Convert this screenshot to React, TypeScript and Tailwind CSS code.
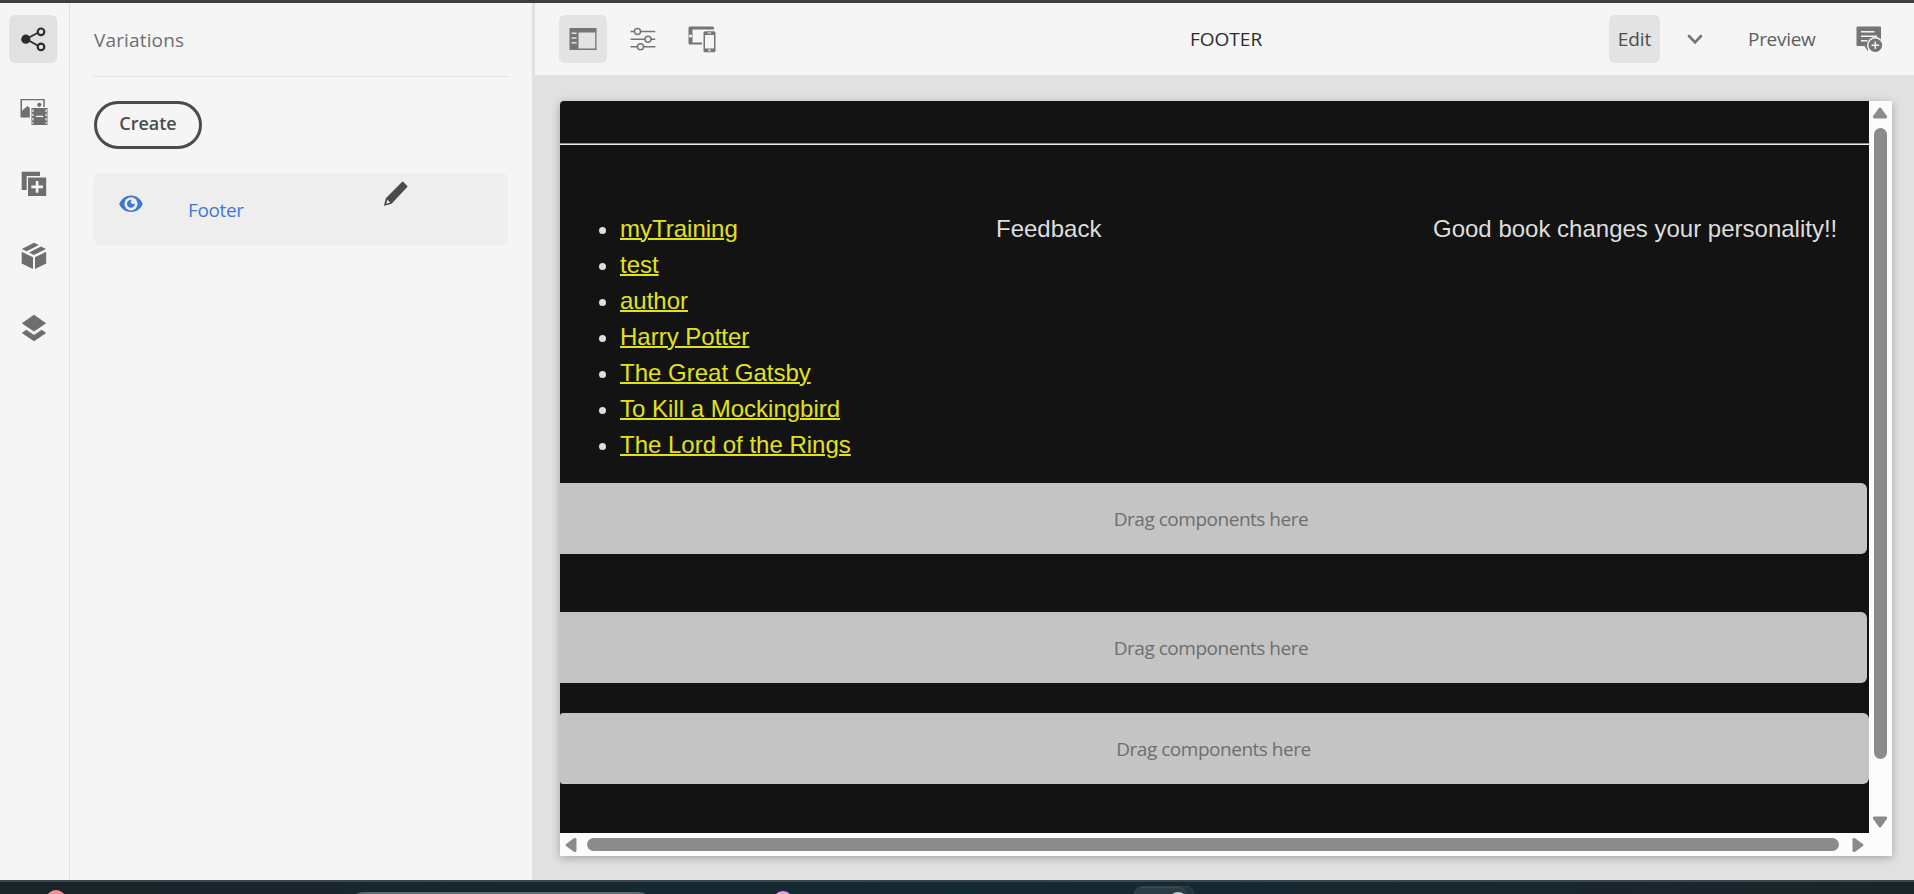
import type { ReactNode } from "react";

const ui = "font-['Open_Sans','Noto_Sans',sans-serif]";

const links = [
  "myTraining",
  "test",
  "author",
  "Harry Potter",
  "The Great Gatsby",
  "To Kill a Mockingbird",
  "The Lord of the Rings",
];

function RailButton({ active = false, children }: { active?: boolean; children: ReactNode }) {
  return (
    <button
      className={
        active
          ? "flex size-12 items-center justify-center rounded-md bg-[#e1e1e1] text-[#2c2c2c]"
          : "flex size-12 items-center justify-center rounded-md pl-px pt-[2px] text-[#6e6e6e]"
      }
    >
      {children}
    </button>
  );
}

function ShareIcon() {
  return (
    <svg width="26" height="26" viewBox="0 0 26 26" fill="none" stroke="currentColor">
      <path d="M6 13 19.500 6M6 13 19.500 20.500" strokeWidth="1.900" />
      <circle cx="5.800" cy="13.200" r="4.600" fill="currentColor" stroke="none" />
      <circle cx="21" cy="5.800" r="3.300" fill="#e1e1e1" strokeWidth="2.200" />
      <circle cx="21" cy="20.900" r="3.300" fill="#e1e1e1" strokeWidth="2.200" />
    </svg>
  );
}

function AssetsIcon() {
  return (
    <svg width="28" height="28" viewBox="0 0 28 28" fill="currentColor">
      <path d="M.5 1h24.300v8h-1.500V2.300H2V12.700L7.500 8 9.800 10v9.500H.5Z" />
      <circle cx="19.300" cy="6.800" r="2.100" />
      <path d="M11.500 10h16v17h-16Z" />
      <path fill="#f5f5f5" d="M12.300 11.500h1.200v2.500h-1.200Zm0 4.300h1.200v2.500h-1.200Zm0 4.300h1.200v2.500h-1.200Zm0 4.100h1.200v1.800h-1.200ZM25.500 11.500h1.200v2.500h-1.200Zm0 4.300h1.200v2.500h-1.200Zm0 4.300h1.200v2.500h-1.200Zm0 4.100h1.200v1.800h-1.200ZM15.800 17.800h7.500v1.300h-7.500Z" />
    </svg>
  );
}

function ComponentsIcon() {
  return (
    <svg width="26" height="26" viewBox="0 0 26 26" fill="currentColor">
      <path d="M.7.700H19V5H5.700V19H.7Z" />
      <path d="M7 6.500H25.200V25H7Z" />
      <path d="M16.100 10v11.800M10.300 15.900h11.700" stroke="#f5f5f5" strokeWidth="2.700" />
    </svg>
  );
}

function BoxIcon() {
  return (
    <svg width="26" height="28" viewBox="0 0 26 28" fill="currentColor">
      <path d="M13 .8 17.800 2.900 5.800 9.200.8 6.900ZM20 4.600 25 6.900 12.800 13.100 8 10.600Z" />
      <path d="M.7 9.800 12 15.300V27L.7 21.500ZM25.200 9.800 14 15.300V27L25.200 21.500Z" />
    </svg>
  );
}

function LayersIcon() {
  return (
    <svg width="26" height="28" viewBox="0 0 26 28" fill="currentColor">
      <path d="M13 .8 25.200 9.300 13 17.600.8 9.300Z" />
      <path d="M5.300 15.800 13 21 20.700 15.800 25.200 18.900 13 27.300.8 18.900Z" />
    </svg>
  );
}

function EyeIcon() {
  return (
    <svg width="24" height="18" viewBox="0 0 24 18" className="ml-[0.5px] mt-[22px] text-[#4078d0]" fill="currentColor">
      <path d="M12 .5C5.500.5 1.500 5.500.2 9 1.500 12.500 5.500 17 12 17s10.500-4.500 11.700-8C22.500 5.500 18.500.5 12 .5Z" />
      <circle cx="12" cy="8.800" r="6.600" fill="#eee" />
      <path d="M12.800 4.900A4 4 0 1 0 15.900 8.100 2 2 0 0 1 12.800 8.600 2.400 2.400 0 0 1 12.800 4.900Z" />
    </svg>
  );
}

function PencilIcon() {
  return (
    <svg width="24" height="26" viewBox="0 0 24 26" fill="#4b4b4b">
      <path d="M18.200.7Q18.700.2 19.200.7L23.300 5Q23.700 5.500 23.300 6L8 22.300Q7.500 22.800 6.800 23L.3 24.800Q-.2 24.800.100 24L1.800 17.300Z" />
      <path d="M3.400 18.700 6.200 21.600 2.200 22.800Z" fill="#eee" />
    </svg>
  );
}

function PanelIcon() {
  return (
    <svg width="28" height="24" viewBox="0 0 28 24" className="mr-px">
      <path d="M.5 1H27.500V23H.5Z" fill="#757575" />
      <path d="M9.500 5.500H26.200V21.500H9.500Z" fill="#e3e3e3" />
      <path d="M2.600 6.300H7.600M2.600 11H7.600M2.600 15.700H7.600" stroke="#e3e3e3" strokeWidth="1.500" />
    </svg>
  );
}

function SlidersIcon() {
  return (
    <svg width="26" height="24" viewBox="0 0 26 24" fill="#f5f5f5" stroke="#757575">
      <path d="M.5 4.500H25.300M.5 12.200H25.300M.5 19.700H25.300" strokeWidth="1.500" />
      <circle cx="7.500" cy="4.500" r="3" strokeWidth="1.500" />
      <circle cx="18" cy="12.200" r="3" strokeWidth="1.500" />
      <circle cx="10.500" cy="19.700" r="3" strokeWidth="1.500" />
    </svg>
  );
}

function DevicesIcon() {
  return (
    <svg width="28" height="27" viewBox="0 0 28 27" fill="#757575">
      <path d="M2 .5H24.500Q26 .5 26 2V3.500H4.500V16.500H14V18.500H2Q.5 18.500.5 17V2Q.5.500 2 .5Z" />
      <circle cx="2.500" cy="10" r="1.600" fill="#f5f5f5" />
      <rect x="15.500" y="5.300" width="12" height="21" rx="1.600" />
      <path d="M17 9H26V22.500H17Z" fill="#f5f5f5" />
      <path d="M19.500 6.600h3.700v1h-3.700ZM20.500 23.500h2v1.700h-2Z" fill="#f5f5f5" />
    </svg>
  );
}

function AnnotateIcon() {
  return (
    <svg width="27" height="27" viewBox="0 0 27 27" className="mt-px">
      <path d="M1.500.5H24Q25 .5 25 1.500V19H12V25.500L8.500 20H1.500Q.5 20 .5 19V1.500Q.5.500 1.500.5Z" fill="#757575" />
      <path d="M5 5.700H18.500M5 10.200H21M5 14.700H11.500" stroke="#f5f5f5" strokeWidth="1.500" />
      <circle cx="19.300" cy="19.300" r="8.300" fill="#f5f5f5" />
      <circle cx="19.300" cy="19.300" r="6.800" fill="#757575" />
      <path d="M19.300 15.500v7.600M15.500 19.300h7.600" stroke="#f5f5f5" strokeWidth="1.500" />
    </svg>
  );
}

function Arrow({ className }: { className: string }) {
  return (
    <svg width="16" height="12" viewBox="0 0 16 12" className={className} fill="#8b8b8b">
      <path d="M6.900 1Q8 0 9.100 1L15 9.200Q15.500 11.300 13.800 11.500H2.200Q.5 11.300 1 9.200Z" />
    </svg>
  );
}

function DropZone({ className }: { className: string }) {
  return (
    <div className={"flex h-[71px] shrink-0 items-center justify-center bg-[#c4c4c4] " + className}>
      <span className={"text-[19px] tracking-[-0.48px] text-[#6e6e6e] " + ui}>Drag components here</span>
    </div>
  );
}

export default function App() {
  return (
    <div className={"flex h-[894px] w-[1914px] flex-col overflow-hidden bg-[#f5f5f5] text-[19px] " + ui}>
      <div className="h-[3px] shrink-0 bg-[#3e3e3e]" />
      <div className="flex h-[877px] shrink-0">
        <nav className="flex w-[70px] shrink-0 flex-col items-center gap-6 border-r border-[#e1e1e1] pr-[3px] pt-3">
          <RailButton active><ShareIcon /></RailButton>
          <RailButton><AssetsIcon /></RailButton>
          <RailButton><ComponentsIcon /></RailButton>
          <RailButton><BoxIcon /></RailButton>
          <RailButton><LayersIcon /></RailButton>
        </nav>

        <aside className="flex w-[465px] shrink-0 flex-col border-r-[3px] border-[#e1e1e1] pl-6 pr-6">
          <h2 className="flex h-[74px] w-[414px] shrink-0 items-center border-b border-[#e1e1e1] pt-px text-[19px] tracking-[0.15px] text-[#6e6e6e]">
            Variations
          </h2>
          <button className="mt-6 flex h-12 w-[108px] items-center justify-center rounded-full border-[3px] border-[#4b4b4b] pb-1 text-[18px] font-semibold text-[#4b4b4b]">
            Create
          </button>
          <div className="mt-6 flex h-[72px] w-[414px] rounded-md bg-[#eeeeee] pl-6">
            <EyeIcon />
            <span className="ml-[45.5px] mt-[23px] w-[196px] leading-7 tracking-[-0.35px] text-[#4078d0]">Footer</span>
            <div className="mt-[8px]"><PencilIcon /></div>
          </div>
        </aside>

        <main className="flex min-w-0 flex-1 flex-col bg-[#e1e1e1]">
          <header className="flex h-[72px] shrink-0 items-center bg-[#f5f5f5] pl-6">
            <button className="flex size-12 items-center justify-center rounded-md bg-[#e3e3e3]"><PanelIcon /></button>
            <button className="ml-[23px]"><SlidersIcon /></button>
            <button className="ml-[32px] mt-px"><DevicesIcon /></button>
            <h1 className="ml-[474px] w-[75px] whitespace-nowrap pt-px text-[19px] text-[#2c2c2c]">FOOTER</h1>
            <button className="ml-[344px] flex h-12 w-[51px] items-center justify-center rounded-md bg-[#e3e3e3] pt-px tracking-[-0.1px] text-[#4b4b4b]">Edit</button>
            <svg width="16" height="11" viewBox="0 0 16 11" fill="none" className="ml-[27px]">
              <path d="M2 2 8 8.300 14 2" stroke="#757575" strokeWidth="2.600" strokeLinecap="round" />
            </svg>
            <span className="ml-[45px] w-[68px] whitespace-nowrap pt-px tracking-[-0.3px] text-[#5e5e5e]">Preview</span>
            <button className="ml-[40px]"><AnnotateIcon /></button>
          </header>

          <section className="ml-[25px] mt-[26px] flex h-[755px] w-[1332px] shrink-0 flex-col overflow-hidden rounded-tl bg-[#fcfcfc] shadow-[0_2px_10px_rgba(0,0,0,0.28)]">
            <div className="flex h-[732px] shrink-0">
              <div className="flex w-[1309px] shrink-0 flex-col overflow-hidden bg-[#131313] font-['Liberation_Sans',Arial,sans-serif] text-[24px] leading-9 text-[#dedede]">
                <div className="mt-[42px] h-[2px] shrink-0 border-b border-t border-b-[#eeeeee] border-t-[#8f8f8f]" />
                <div className="mt-[66px] flex h-[272px] shrink-0">
                  <ul className="w-[436px] list-disc pl-[60px]">
                    {links.map((label) => (
                      <li key={label}>
                        <a className="text-[#e2e21b] underline decoration-2">{label}</a>
                      </li>
                    ))}
                  </ul>
                  <p className="w-[437px]">Feedback</p>
                  <p className="whitespace-nowrap">Good book changes your personality!!</p>
                </div>
                <DropZone className="w-[1307px] rounded-r-md pr-[5px]" />
                <DropZone className="mt-[58px] w-[1307px] rounded-r-md pr-[5px]" />
                <DropZone className="mt-[30px] w-[1309px] rounded-l-[3px] rounded-r-md pr-[2px]" />
              </div>
              <div className="flex w-[23px] shrink-0 flex-col items-center pt-[6px]">
                <Arrow className="mr-px" />
                <div className="mt-[9px] h-[631px] w-[13px] rounded-full bg-[#8b8b8b]" />
                <Arrow className="mr-px mt-[57px] rotate-180" />
              </div>
            </div>
            <div className="flex h-[23px] items-center pl-[3px]">
              <Arrow className="-rotate-90" />
              <div className="ml-[8px] h-[13px] w-[1252px] rounded-full bg-[#8b8b8b]" />
              <Arrow className="ml-[11px] rotate-90" />
            </div>
          </section>
        </main>
      </div>

      <footer className="flex h-[14px] shrink-0 items-start overflow-hidden border-t-2 border-[#3a464c] bg-linear-to-r from-[#1b2429] via-[#142a35] to-[#1b2529]">
        <div className="ml-[46px] mt-2 size-[20px] shrink-0 rounded-full bg-[#ff8f9a]" />
        <div className="ml-[282px] mt-[10px] h-10 w-[306px] shrink-0 rounded-2xl bg-[#5f6a72]" />
        <div className="ml-[119px] mt-[9px] size-[20px] shrink-0 rounded-full bg-[#dc9fdf]" />
        <div className="ml-[341px] mt-1 flex h-10 w-[60px] shrink-0 rounded-lg border-r border-t border-[#2f4049] bg-[#22343d]">
          <div className="h-10 w-[53px] rounded-lg border border-[#3a4a53] bg-[#2b3c45] pl-[34px] pt-1">
            <div className="size-[18px] rounded-full bg-[#c3cdd6]" />
          </div>
        </div>
      </footer>
    </div>
  );
}
